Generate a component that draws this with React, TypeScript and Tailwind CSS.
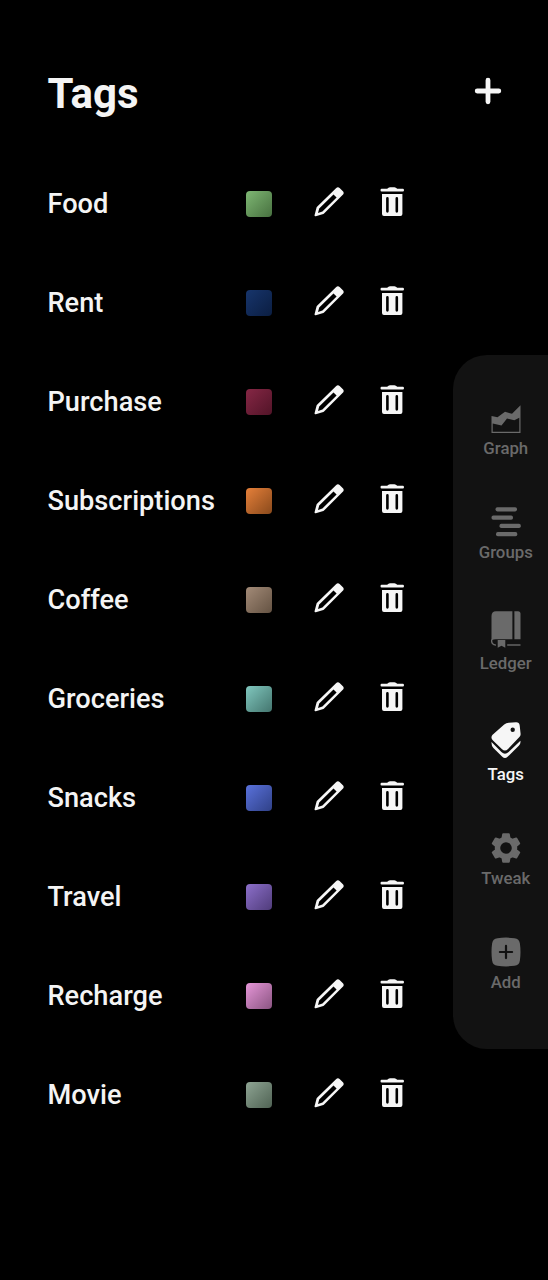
import React from "react";

type Tag = { name: string; swatch: string };

const tags: Tag[] = [
  { name: "Food", swatch: "from-[#7fb874] to-[#487140]" },
  { name: "Rent", swatch: "from-[#17356c] to-[#0b1e42]" },
  { name: "Purchase", swatch: "from-[#862745] to-[#521428]" },
  { name: "Subscriptions", swatch: "from-[#e6803a] to-[#8a4a1c]" },
  { name: "Coffee", swatch: "from-[#a38b78] to-[#655343]" },
  { name: "Groceries", swatch: "from-[#81c8bf] to-[#44766f]" },
  { name: "Snacks", swatch: "from-[#5a72dc] to-[#304188]" },
  { name: "Travel", swatch: "from-[#8d70cb] to-[#503c7b]" },
  { name: "Recharge", swatch: "from-[#e797d9] to-[#8b5582]" },
  { name: "Movie", swatch: "from-[#8fa594] to-[#506354]" },
];

function PencilIcon() {
  return (
    <svg width="30" height="30" viewBox="0 0 30 30" fill="#f6f6f6">
      <path
        fillRule="evenodd"
        d="M.6 28 L2.3 21.4 Q2.5 20.4 3.3 19.6 L22 1.3 Q23.9 -.5 25.6 1.1 L28.9 4.3 Q30.5 6 28.8 7.8 L10.3 26.3 Q9.5 27.1 8.5 27.3 L1.8 29.2 Q.3 29.5 .6 28 Z M5.2 21.4 L4 25.9 L8.4 24.6 L22.6 10.4 L19.5 7.4 Z"
      />
    </svg>
  );
}

function TrashIcon() {
  return (
    <svg width="24" height="30" viewBox="0 0 24 30" fill="#f6f6f6">
      <path d="M1.6 1.8 H7.2 Q8.4 .2 10 .2 H14.4 Q16 .2 17.2 1.8 H22.8 Q24 1.8 24 3.2 Q24 4.5 22.8 4.5 H1.6 Q.5 4.5 .5 3.2 Q.5 1.8 1.6 1.8 Z" />
      <path
        fillRule="evenodd"
        d="M2 7 H22.4 V27 Q22.4 29 20.4 29 H4 Q2 29 2 27 Z M7.4 10 Q6.1 10 6.1 11.4 V24.3 Q6.1 25.7 7.4 25.7 Q8.7 25.7 8.7 24.3 V11.4 Q8.7 10 7.4 10 Z M16.8 10 Q15.5 10 15.5 11.4 V24.3 Q15.5 25.7 16.8 25.7 Q18.1 25.7 18.1 24.3 V11.4 Q18.1 10 16.8 10 Z"
      />
    </svg>
  );
}

function GraphIcon() {
  return (
    <svg width="30" height="28" viewBox="0 0 30 28" fill="currentColor">
      <path d="M.5 11 L6.5 12.2 L14 6.8 L21 8.8 L29.5 .2 V28 H.5 Z M1.7 18.6 V26.7 H28.3 V12.7 L23.3 15.3 L16 13.4 L10.5 20.4 Z" fillRule="evenodd" />
    </svg>
  );
}

function GroupsIcon() {
  return (
    <svg width="30" height="30" viewBox="0 0 30 30" fill="currentColor">
      <rect x="4.5" y="0.2" width="21.5" height="4.2" rx="1.8" />
      <rect x="0.5" y="8.6" width="21.5" height="4.2" rx="1.8" />
      <rect x="8.5" y="16.8" width="21.3" height="4.2" rx="1.8" />
      <rect x="5" y="25.1" width="21.3" height="4.2" rx="1.8" />
    </svg>
  );
}

function LedgerIcon() {
  return (
    <svg width="30" height="37" viewBox="0 0 30 37" fill="currentColor">
      <path d="M5 .3 H21.4 V28.2 H5 Q2.5 28.2 .5 29.6 V5 Q.5 .3 5 .3 Z" />
      <path d="M23.4 .3 H27 Q29.5 .3 29.5 2.8 V28.2 H23.4 Z" />
      <path
        d="M.6 28.5 Q.2 34 5 34.1"
        fill="none"
        stroke="currentColor"
        strokeWidth="1.4"
      />
      <path d="M6.7 29.1 H14.3 V36.7 L10.5 34.8 L6.7 36.7 Z" />
      <path d="M16.2 33.3 H29.5 V34.7 H16.2 Z" />
    </svg>
  );
}

function TagsIcon() {
  return (
    <svg width="30" height="37" viewBox="0 0 30 37" fill="currentColor">
      <path
        fillRule="evenodd"
        d="M17.7 .8 L25 .3 Q28.3 .2 28.7 3.5 L29.6 11.8 Q29.8 13.6 28.4 15 L17 27 Q14 30 10.8 27 L2 18.6 Q-.9 15.6 1.6 12.7 L13.2 2.5 Q15.3 .9 17.7 .8 Z M21.7 5.5 A2.2 2.2 0 1 0 21.7 9.9 A2.2 2.2 0 1 0 21.7 5.5 Z"
      />
      <path d="M.5 20 L10.4 30 Q14 33.3 17.6 30 L29.4 18.8 Q29.9 21.8 27.8 23.7 L16.6 34.8 Q14 37.2 11.3 34.8 L2.4 26.1 Q.2 23.6 .5 20 Z" />
    </svg>
  );
}

function GearIcon() {
  return (
    <svg width="30" height="30" viewBox="0 0 30 30">
      <path
        fill="currentColor"
        stroke="currentColor"
        strokeWidth="2"
        strokeLinejoin="round"
        fillRule="evenodd"
        d="M12.2 1.2 H17.8 L18.5 5.1 L21.5 6.8 L25.3 5.5 L28.2 10.4 L25.2 13 V17 L28.2 19.6 L25.3 24.5 L21.5 23.2 L18.5 24.9 L17.8 28.8 H12.2 L11.5 24.9 L8.5 23.2 L4.7 24.5 L1.8 19.6 L4.8 17 V13 L1.8 10.4 L4.7 5.5 L8.5 6.8 L11.5 5.1 Z M15 8.2 A6.8 6.8 0 1 0 15 21.8 A6.8 6.8 0 1 0 15 8.2 Z"
      />
    </svg>
  );
}

function AddIcon() {
  return (
    <svg width="30" height="30" viewBox="0 0 30 30">
      <path
        fill="currentColor"
        d="M6.5 1.2 Q15 0 23.5 1.2 Q28.3 1.7 28.9 6.5 Q30.1 15 28.9 23.5 Q28.3 28.3 23.5 28.8 Q15 30 6.5 28.8 Q1.7 28.3 1.1 23.5 Q-.1 15 1.1 6.5 Q1.7 1.7 6.5 1.2 Z"
      />
      <path d="M15 8.9 V21.1 M8.9 15 H21.1" stroke="#121212" strokeWidth="2.2" strokeLinecap="round" />
    </svg>
  );
}

const nav = [
  { label: "Graph", icon: <GraphIcon /> },
  { label: "Groups", icon: <GroupsIcon /> },
  { label: "Ledger", icon: <LedgerIcon /> },
  { label: "Tags", icon: <TagsIcon />, active: true },
  { label: "Tweak", icon: <GearIcon /> },
  { label: "Add", icon: <AddIcon /> },
];

export default function App() {
  return (
    <div className="flex h-[1280px] w-[548px] flex-col overflow-hidden bg-black font-['Roboto',sans-serif] text-[#f4f4f4]">
      <header className="flex h-[154px] shrink-0 items-start justify-between pt-[68px] pr-[46px] pl-[47.5px]">
        <h1 className="mt-px text-[42px] leading-[50px] font-bold">Tags</h1>
        <button aria-label="Add tag" className="mt-[9px]">
          <svg width="28" height="28" viewBox="0 0 28 28" stroke="#f6f6f6" strokeWidth="4.8" strokeLinecap="round">
            <path d="M14 3.2 V24.8 M3.2 14 H24.8" />
          </svg>
        </button>
      </header>
      <div className="flex flex-1 justify-between">
        <ul className="flex flex-col pl-[47px]">
          {tags.map((tag) => (
            <li key={tag.name} className="flex h-[99px] items-center">
              <span className="w-[199px] pl-[0.5px] text-[27.2px] leading-8 font-medium">{tag.name}</span>
              <span className={`mt-px size-[26px] rounded-[4px] bg-linear-to-br ${tag.swatch}`} />
              <button aria-label={`Edit ${tag.name}`} className="mb-[3px] ml-[42px]">
                <PencilIcon />
              </button>
              <button aria-label={`Delete ${tag.name}`} className="mb-[3px] ml-9">
                <TrashIcon />
              </button>
            </li>
          ))}
        </ul>
        <nav className="mt-[201px] flex h-[694px] w-[95.5px] flex-col items-center gap-[49px] rounded-l-[34px] bg-[#121212] pt-[50px] pl-[11px]">
          {nav.map((item) => (
            <a
              key={item.label}
              className={`flex flex-col items-center gap-[5px] ${item.active ? "text-[#f6f6f6]" : "text-[#6a6a6a]"}`}
            >
              {item.icon}
              <span className="text-[16.8px] leading-5 font-medium">{item.label}</span>
            </a>
          ))}
        </nav>
      </div>
    </div>
  );
}
